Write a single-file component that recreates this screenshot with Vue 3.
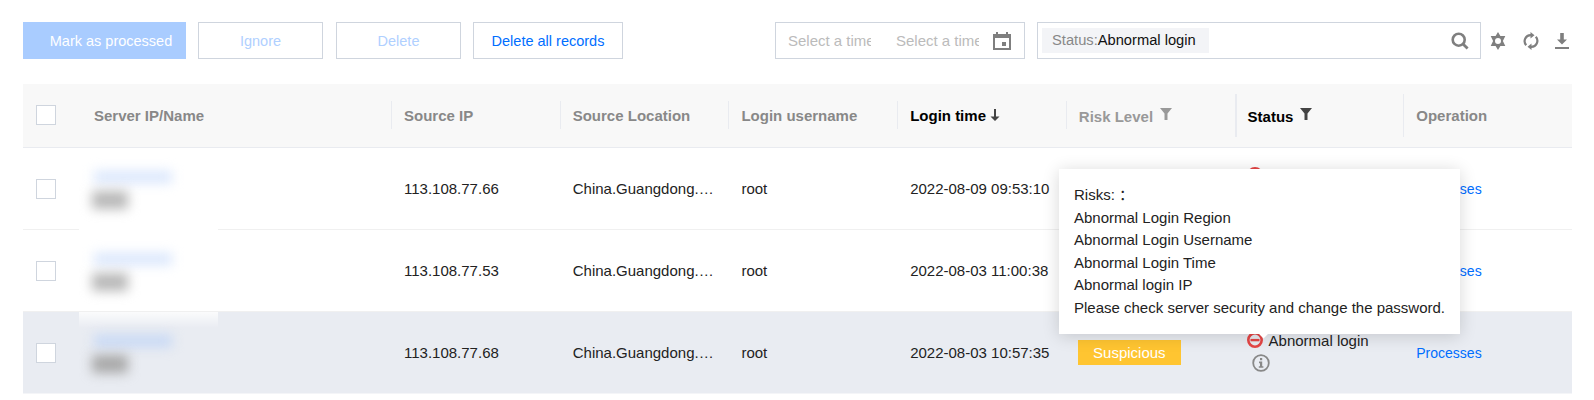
<script setup>
const rows = [
  { ip: '113.108.77.66', time: '2022-08-09 09:53:10', active: false },
  { ip: '113.108.77.53', time: '2022-08-03 11:00:38', active: false },
  { ip: '113.108.77.68', time: '2022-08-03 10:57:35', active: true }
]
const risks = [
  'Risks: ：',
  'Abnormal Login Region',
  'Abnormal Login Username',
  'Abnormal Login Time',
  'Abnormal login IP',
  'Please check server security and change the password.'
]
</script>

<template>
  <div class="page">
    <div class="toolbar">
      <button class="btn primary">Mark as processed</button>
      <button class="btn ghost w125">Ignore</button>
      <button class="btn ghost w125 gap13">Delete</button>
      <button class="btn strong">Delete all records</button>
      <div class="spacer"></div>
      <div class="range">
        <span class="time">Select a time</span>
        <span class="time second">Select a time</span>
        <svg class="cal" viewBox="0 0 18 18" width="18" height="18">
          <path fill="#7f7f7f" d="M3 0h2v2h8V0h2v2h3v16H0V2h3z" />
          <rect x="2" y="6" width="14" height="10" fill="#fff" />
          <rect x="9" y="10" width="4" height="4" fill="#7f7f7f" />
        </svg>
      </div>
      <div class="search">
        <div class="tag"><span class="tag-key">Status:</span>Abnormal login</div>
        <svg class="search-ico" viewBox="0 0 18 18" width="18" height="18">
          <circle cx="7.7" cy="7.7" r="6" fill="none" stroke="#7f7f7f" stroke-width="2.6" />
          <path d="M12 12l4.6 4.6" stroke="#7f7f7f" stroke-width="2.8" fill="none" />
        </svg>
      </div>
      <div class="tools">
        <svg viewBox="0 0 18 18" width="18" height="18">
          <path fill="#7f7f7f" fill-rule="evenodd" d="M9 0l2.4 4.1h4.9L13.9 9l2.4 4.9h-4.9L9 18l-2.4-4.1H1.7L4.1 9 1.7 4.1h4.9zM9 6a3 3 0 1 0 0 6 3 3 0 0 0 0-6z" />
        </svg>
        <svg viewBox="0 0 16 18" width="16" height="18">
          <path fill="none" stroke="#7f7f7f" stroke-width="2.2" d="M3.2 13.2A6 6 0 0 1 8 3.2M12.8 4.8A6 6 0 0 1 8 14.8" />
          <path fill="#7f7f7f" d="M7.5 0l4 3.2-4 3.2zM8.5 11.6v6.4l-4-3.2z" />
        </svg>
        <svg viewBox="0 0 14 16" width="14" height="16">
          <path fill="#7f7f7f" d="M5.2 0h3.6v6.5H12L7 11.5 2 6.5h3.2zM0 14h14v2H0z" />
        </svg>
      </div>
    </div>

    <div class="table">
      <div class="thead grid">
        <div class="th first">
          <span class="check"></span>
          <span class="th-name">Server IP/Name</span>
        </div>
        <div class="th"><i class="sep"></i>Source IP</div>
        <div class="th"><i class="sep"></i>Source Location</div>
        <div class="th"><i class="sep"></i>Login username</div>
        <div class="th on"><i class="sep"></i><span class="nudge1">Login time</span>
          <svg class="sort" viewBox="0 0 10 12" width="10" height="12">
            <path fill="#444" d="M4 0h2v7.5h3.5L5 12 .5 7.5H4z" />
          </svg>
        </div>
        <div class="th light"><i class="sep"></i><span class="nudge2">Risk Level</span>
          <svg class="funnel" viewBox="0 0 12 12" width="12" height="12">
            <path fill="#999" d="M0 0h12L7.5 5.5V12h-3V5.5z" />
          </svg>
        </div>
        <div class="th on"><i class="sep tall thick"></i><span class="nudge2">Status</span>
          <svg class="funnel" viewBox="0 0 12 12" width="12" height="12">
            <path fill="#444" d="M0 0h12L7.5 5.5V12h-3V5.5z" />
          </svg>
        </div>
        <div class="th"><i class="sep tall"></i>Operation</div>
      </div>

      <div v-for="(r, i) in rows" :key="r.ip" class="row grid" :class="{ active: r.active }">
        <div class="td first">
          <span class="check"></span>
          <div class="masked" :class="'m' + i">
            <div class="blur-name"></div>
            <div class="blur-sub"></div>
          </div>
        </div>
        <div class="td">{{ r.ip }}</div>
        <div class="td"><span class="loc">China.Guangdong.Shenzhen</span></div>
        <div class="td">root</div>
        <div class="td">{{ r.time }}</div>
        <div class="td risk"><span class="badge">Suspicious</span></div>
        <div class="td status" :class="'s' + i">
          <div class="status-line">
            <svg viewBox="0 0 16 16" width="16" height="16">
              <circle cx="8" cy="8" r="6.7" fill="none" stroke="#e54545" stroke-width="2.6" />
              <rect x="3.5" y="6.9" width="9" height="2.4" fill="#e54545" />
            </svg>
            <span>Abnormal login</span>
          </div>
          <svg class="info" viewBox="0 0 18 18" width="18" height="18">
            <circle cx="9" cy="9" r="7.8" fill="none" stroke="#888" stroke-width="1.8" />
            <rect x="8" y="4" width="2.2" height="2.2" fill="#888" />
            <path fill="#888" d="M7 7.6h3.2v4.6H11.4v1.6H6.8v-1.6H8V9.2H7z" />
          </svg>
        </div>
        <div class="td"><a class="link">Processes</a></div>
      </div>
    </div>

    <div class="tip">
      <div v-for="line in risks" :key="line" class="tip-line">{{ line }}</div>
      <i class="tip-arrow"></i>
    </div>
  </div>
</template>

<style>
html, body { margin: 0; background: #fff; }
</style>

<style scoped>
.page {
  position: relative;
  box-sizing: border-box;
  width: 1594px;
  height: 400px;
  overflow: hidden;
  padding: 22px 22px 0 23px;
  background: #fff;
  font-family: "Liberation Sans", "Noto Sans CJK SC", Arial, sans-serif;
  font-size: 15px;
  color: #222;
}
.toolbar { display: flex; align-items: stretch; height: 37px; }
.btn {
  box-sizing: border-box;
  margin: 0 0 0 12px;
  padding: 0;
  background: #fff;
  border: 1px solid #cfd5de;
  font: inherit;
  font-size: 14.5px;
  text-align: center;
}
.primary {
  width: 163px;
  margin-left: 0;
  padding-left: 13px;
  background: #a9ccff;
  border: 0;
  color: #fff;
}
.w125 { width: 125px; }
.gap13 { margin-left: 13px; }
.ghost { color: #b0d0ff; }
.strong { width: 150px; color: #006eff; }
.spacer { flex: 1; }
.range {
  box-sizing: border-box;
  display: flex;
  align-items: center;
  width: 250px;
  padding-left: 12px;
  border: 1px solid #cfd5de;
}
.time {
  width: 83px;
  overflow: hidden;
  white-space: nowrap;
  color: #bbb;
}
.second { margin-left: 25px; }
.cal { margin-left: 14px; }
.search {
  box-sizing: border-box;
  display: flex;
  align-items: center;
  justify-content: space-between;
  width: 444px;
  margin-left: 12px;
  padding: 0 11px 0 4px;
  border: 1px solid #cfd5de;
}
.tag {
  box-sizing: border-box;
  width: 167px;
  height: 25px;
  padding-left: 10px;
  font-size: 14.7px;
  line-height: 25px;
  background: #f3f4f7;
  color: #111;
  white-space: nowrap;
}
.tag-key { color: #888; }
.tools {
  display: flex;
  align-items: center;
  gap: 16px;
  width: 91px;
  padding-left: 8px;
  box-sizing: border-box;
}
.table { margin-top: 25px; }
.grid { display: grid; grid-template-columns: 368px repeat(7, 1fr); }
.thead {
  box-sizing: border-box;
  height: 64px;
  padding-bottom: 1px;
  background: #f8f8f8;
  border-bottom: 1px solid #e9ebf0;
}
.th {
  display: flex;
  align-items: center;
  font-weight: 700;
  color: #888;
  white-space: nowrap;
}
.th.on { color: #000; }
.th.light { color: #999; }
.nudge1 { padding-top: 1px; }
.nudge2 { padding-top: 3px; }
.sep {
  flex: none;
  width: 1px;
  height: 28px;
  margin-right: 12px;
  background: #e9ebf0;
}
.sep.tall { height: 43px; }
.sep.thick { width: 2px; margin-right: 11px; }
.sort { margin: -1px 0 0 4px; }
.funnel { margin: -3px 0 0 7px; }
.first { padding-left: 13px; }
.check {
  flex: none;
  box-sizing: border-box;
  width: 20px;
  height: 20px;
  background: #fff;
  border: 1px solid #cfd5de;
}
.th-name { margin-left: 38px; }
.row {
  box-sizing: border-box;
  height: 82px;
  border-bottom: 1px solid #f0f0f0;
}
.row.active { background: #e9ecf2; border-bottom-color: #f4f5f8; }
.td {
  display: flex;
  align-items: center;
  padding-left: 13px;
  white-space: nowrap;
}
.td.first { padding-left: 13px; }
.masked {
  position: relative;
  align-self: stretch;
  flex: none;
  width: 139px;
  margin-left: 23px;
  padding: 23px 0 0 15px;
  box-sizing: border-box;
}
.m0::after {
  content: "";
  position: absolute;
  left: 0;
  right: 0;
  bottom: -2px;
  height: 3px;
  background: #fff;
}
.m2::before {
  content: "";
  position: absolute;
  left: 0;
  right: 0;
  top: 0;
  height: 16px;
  background: linear-gradient(rgba(255, 255, 255, 0.8), rgba(255, 255, 255, 0));
}
.blur-name {
  width: 78px;
  height: 12px;
  background: #d9e6fc;
  filter: blur(6px);
}
.m2 .blur-name { background: #c6d8f5; }
.blur-sub {
  width: 36px;
  height: 18px;
  margin: 8px 0 0 -2px;
  background: #b8b8b8;
  filter: blur(6px);
}
.m2 .blur-sub { background: #a8a8a8; }
.loc {
  display: block;
  width: 148px;
  overflow: hidden;
  text-overflow: ellipsis;
}
.risk { padding-left: 12px; }
.badge {
  width: 103px;
  height: 25px;
  line-height: 25px;
  text-align: center;
  background: #ffc531;
  color: #fff;
}
.status {
  flex-direction: column;
  align-items: flex-start;
  padding-top: 20px;
  padding-left: 12px;
  box-sizing: border-box;
}
.s0 { padding-top: 19px; }
.status-line { display: flex; align-items: center; gap: 6px; height: 16px; }
.info { margin: 6px 0 0 5px; }
.link { color: #006eff; font-size: 14px; }
.tip {
  position: absolute;
  left: 1059px;
  top: 169px;
  box-sizing: border-box;
  width: 401px;
  height: 165px;
  padding: 15px;
  background: #fff;
  box-shadow: 0 2px 16px rgba(0, 0, 0, 0.16);
  color: #222;
}
.tip-line { height: 22.5px; line-height: 22.5px; white-space: nowrap; }
.tip-arrow {
  position: absolute;
  left: 201px;
  bottom: -3px;
  width: 7px;
  height: 7px;
  background: #fff;
  transform: rotate(45deg);
}
</style>
